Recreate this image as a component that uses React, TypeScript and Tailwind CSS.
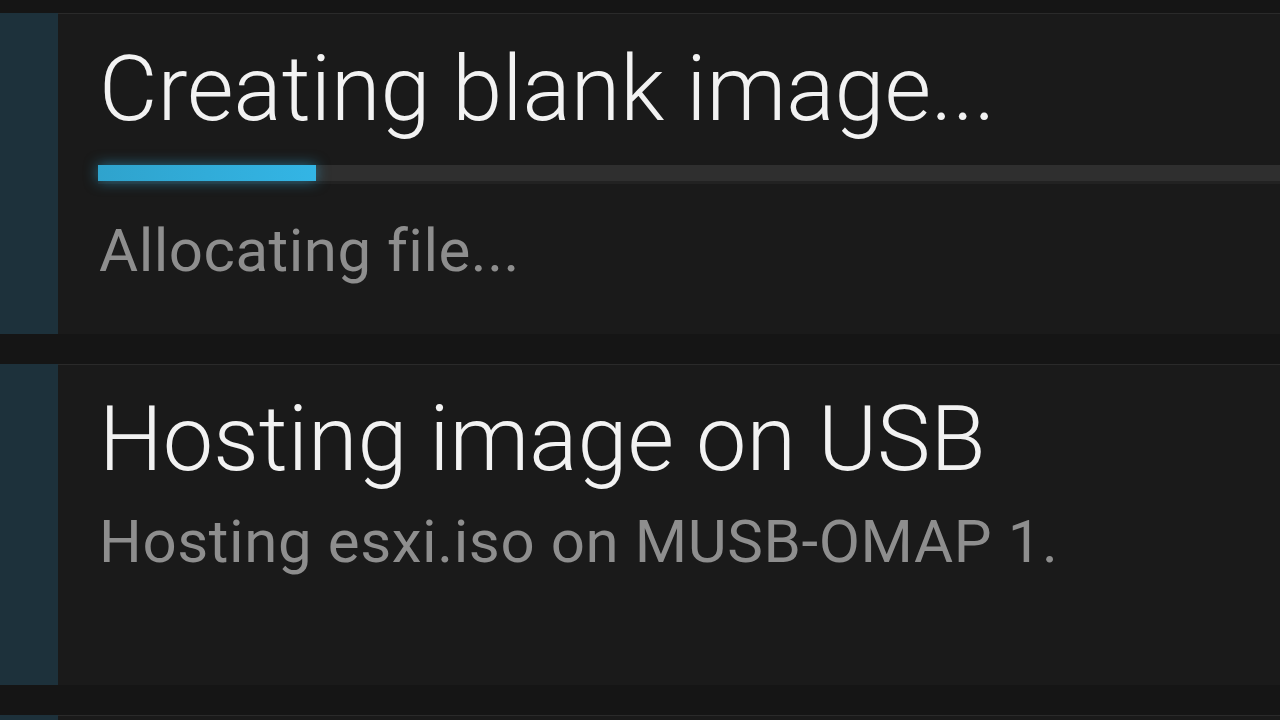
import React from 'react';

interface TaskProps {
  title: string;
  detail: string;
  progress?: number;
  first?: boolean;
}

const TaskCard: React.FC<TaskProps> = ({ title, detail, progress, first }) => {
  return (
    <div className="flex h-[321px] bg-[#1a1a1a]">
      <div className="w-[58px] shrink-0 bg-[#1d313b]"></div>
      <div className={`flex-1 border-t border-[#2a2a2a] pl-[40px] ${first ? 'pt-[31px]' : 'pt-[30px]'}`}>
        <h2 className="text-[90px] leading-[90px] font-light text-[#f2f2f2] pl-[1px] whitespace-nowrap">
          {title}
        </h2>
        {progress !== undefined ? (
          <>
            <div className="mt-[30px] h-[19px] border-b-[3px] border-[#222222] bg-[#2f2f2f]">
              <div
                className="h-full bg-gradient-to-r from-[#2fa3cd] to-[#33b5e5] shadow-[0_0_14px_rgba(51,181,229,0.55)]"
                style={{ width: `${progress}px` }}
              ></div>
            </div>
            <p className="mt-[37px] text-[60px] leading-[60px] text-[#8e8e8e] tracking-[0.5px] pl-[1px] whitespace-nowrap">
              {detail}
            </p>
          </>
        ) : (
          <p className="mt-[27px] text-[60px] leading-[60px] text-[#8e8e8e] tracking-[0.6px] pl-[1px] whitespace-nowrap">
            {detail}
          </p>
        )}
      </div>
    </div>
  );
};

export default function App() {
  return (
    <div
      className="h-[720px] w-[1280px] overflow-hidden bg-[#151515] pt-[13px]"
      style={{ fontFamily: 'Roboto, "Noto Sans", sans-serif' }}
    >
      <div className="flex flex-col gap-[30px]">
        <TaskCard title="Creating blank image..." detail="Allocating file..." progress={218} first />
        <TaskCard title="Hosting image on USB" detail="Hosting esxi.iso on MUSB-OMAP 1." />
        <TaskCard title="" detail="" />
      </div>
    </div>
  );
}
